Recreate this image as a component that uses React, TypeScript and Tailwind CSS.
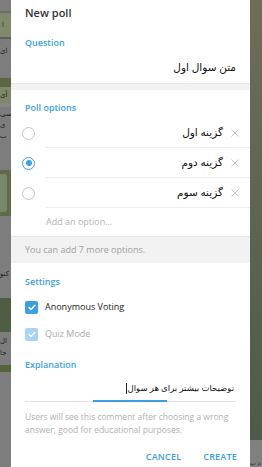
import React from "react";

const blue = "text-[#3d9fe0]";

const options = [
  { text: "گزینه اول", checked: false },
  { text: "گزینه دوم", checked: true },
  { text: "گزینه سوم", checked: false },
];

const Backdrop: React.FC = () => (
  <div className="flex w-[11px] shrink-0 flex-col overflow-hidden bg-[#7d7d7d] text-[7px] leading-none text-[#1e1e1e] [font-family:'DejaVu_Sans',sans-serif]">
    <div className="h-[11px]" />
    <div className="h-[2px] bg-[#6b6b6b]" />
    <div className="flex h-[24px] items-center bg-[#7f8a6d] pl-[2px] text-[#2f3a22]">ا</div>
    <div className="h-[2px] bg-[#5e5e5e]" />
    <div className="h-[39px] pt-[9px]">ای</div>
    <div className="h-[9px] bg-[#5b6645]" />
    <div className="flex h-[16px] items-center bg-[#7c8868]">آی</div>
    <div className="h-[4px] bg-[#868686]" />
    <div className="h-[63px] pt-[2px] leading-[11px]">
      سی
      <br />
      ی ب
      <div className="mt-[26px]">کن</div>
    </div>
    <div className="flex h-[46px] items-center bg-[#5f6b4c] py-[4px]">
      <div className="h-full w-[7px] rounded-r-[3px] bg-[#7b8868]" />
    </div>
    <div className="h-[82px] pt-[53px] leading-[11px]">
      کنو
      <div className="mt-[24px]">دس</div>
    </div>
    <div className="h-[34px] bg-[#4f5d43]" />
    <div className="h-[33px] pt-[3px] leading-[12px]">
      ال
      <br />
      جا
    </div>
    <div className="h-[7px] bg-[#53643f]" />
    <div className="flex-1" />
  </div>
);

const Radio: React.FC<{ checked: boolean }> = ({ checked }) => (
  <div
    className={`flex h-[13px] w-[13px] items-center justify-center rounded-full border-[1.5px] ${
      checked ? "border-[#3d9fe0]" : "border-[#c4c4c4]"
    }`}
  >
    {checked && <div className="h-[6px] w-[6px] rounded-full bg-[#3d9fe0]" />}
  </div>
);

const Check: React.FC<{ light?: boolean }> = ({ light }) => (
  <div
    className={`flex h-[13px] w-[13px] items-center justify-center rounded-[2px] ${
      light ? "bg-[#a8d4f1]" : "bg-[#3d9fe0]"
    }`}
  >
    <svg width="8" height="7" viewBox="0 0 8 7" fill="none">
      <path d="M1 3.6 L3 5.5 L7 1.3" stroke="white" strokeWidth="1.4" strokeLinecap="round" strokeLinejoin="round" />
    </svg>
  </div>
);

const Cross: React.FC = () => (
  <svg width="8" height="8" viewBox="0 0 8 8" className="shrink-0">
    <path d="M0.5 0.5 L7.5 7.5 M7.5 0.5 L0.5 7.5" stroke="#c2c2c2" strokeWidth="0.9" />
  </svg>
);

const Label: React.FC<{ children: React.ReactNode; className?: string }> = ({ children, className }) => (
  <div className={`flex items-center pl-[14px] text-[9px] font-semibold ${blue} ${className ?? ""}`}>{children}</div>
);

const Dialog: React.FC = () => (
  <div className="flex w-[239px] shrink-0 flex-col bg-white text-[9px] text-[#222] [font-family:'Open_Sans','DejaVu_Sans',sans-serif]">
    <div className="flex h-[26px] items-center pl-[14px] text-[11px] font-semibold text-[#333]">New poll</div>

    <Label className="mt-[4px] h-[26px]">Question</Label>
    <div dir="rtl" className="flex h-[24px] items-center pr-[14px] text-[10.5px] text-[#111]">
      متن سوال اول
    </div>
    <div className="mt-[3px] h-[7px] border-t border-[#e8e8e8] bg-[#f2f2f2]" />

    <Label className="mt-[8px] h-[20px]">Poll options</Label>
    {options.map((o) => (
      <div key={o.text} className="flex h-[30px] items-center">
        <div className="flex w-[34px] shrink-0 justify-center pl-[1px]">
          <Radio checked={o.checked} />
        </div>
        <div className="flex h-full flex-1 items-center justify-end border-b border-[#eeeeee] pr-[11px]">
          <span dir="rtl" className="mr-[8px] text-[10.5px] text-[#111]">
            {o.text}
          </span>
          <Cross />
        </div>
      </div>
    ))}
    <div className="flex h-[28px] items-center pl-[35px] text-[#b2b2b2]">Add an option...</div>
    <div className="flex h-[27px] items-center border-t border-[#e6e6e6] bg-[#f2f2f2] pl-[14px] text-[#a0a0a0]">
      You can add 7 more options.
    </div>

    <Label className="mt-[8px] h-[22px]">Settings</Label>
    <div className="mt-[2px] flex h-[24px] items-center gap-[7px] pl-[14px] text-[#222]">
      <Check />
      Anonymous Voting
    </div>
    <div className="mt-[3px] flex h-[24px] items-center gap-[7px] pl-[14px] text-[#a8a8a8]">
      <Check light />
      Quiz Mode
    </div>

    <Label className="mt-[8px] h-[22px]">Explanation</Label>
    <div className="mx-[14px] flex h-[26px] flex-col">
      <div dir="rtl" className="flex flex-1 items-center pr-[2px] text-[8.5px] text-[#111]">
        <span>توضیحات بیشتر برای هر سوال</span>
        <span className="ml-[1px] h-[11px] w-px bg-[#222]" />
      </div>
      <div className="relative h-px bg-[#e3e3e3]">
        <div className="absolute left-[68px] top-[-1px] h-[2px] w-[74px] bg-[#3d9fe0]" />
      </div>
    </div>
    <div className="mt-[8px] px-[14px] text-[8.5px] leading-[13px] text-[#b0b0b0]">
      Users will see this comment after choosing a wrong answer, good for educational purposes.
    </div>
    <div className="mt-[14px] flex justify-end gap-[22px] pr-[13px] text-[9px] font-semibold tracking-[0.2px] text-[#3d9fe0]">
      <span>CANCEL</span>
      <span>CREATE</span>
    </div>
  </div>
);

const RightStrip: React.FC = () => (
  <div className="flex w-[12px] shrink-0 flex-col">
    <div className="h-[440px] bg-gradient-to-b from-[#6f6d58] via-[#5d6450] to-[#4b5c48]" />
    <div className="flex flex-1 items-end bg-[#808080] pb-[1px] text-[6px] leading-none text-[#222] [font-family:'DejaVu_Sans',sans-serif]">
      د ب
    </div>
  </div>
);

export default function App() {
  return (
    <div className="flex h-[467px] w-[262px] overflow-hidden">
      <Backdrop />
      <Dialog />
      <RightStrip />
    </div>
  );
}
